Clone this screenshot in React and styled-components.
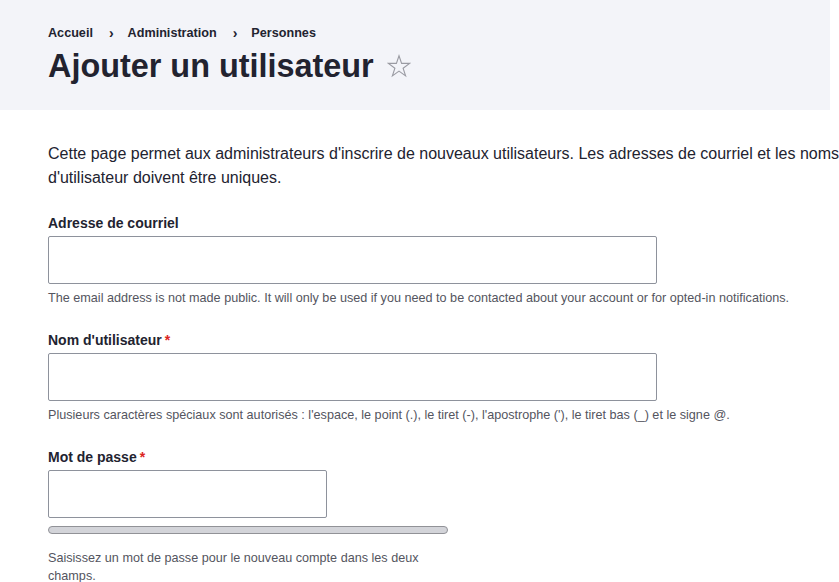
import React from "react";
import styled, { createGlobalStyle } from "styled-components";

const Global = createGlobalStyle`
  html, body { margin: 0; padding: 0; background: #fff; overflow: hidden; }
  body { font-family: "Liberation Sans", Arial, sans-serif; color: #222330; }
`;

const Page = styled.div`
  width: 900px;
`;

const Header = styled.header`
  width: 830px;
  box-sizing: border-box;
  height: 110px;
  background: #f3f4f9;
  padding: 25px 48px 0;
`;

const Crumbs = styled.nav`
  display: flex;
  align-items: center;
  font-size: 12.64px;
  font-weight: 700;
  line-height: 16px;
  color: #222330;
`;

const Sep = styled.span`
  margin: 0 14px 0 16px;
  font-size: 14px;
  font-weight: 700;
`;

const TitleRow = styled.div`
  display: flex;
  align-items: center;
  margin-top: 5px;
`;

const Title = styled.h1`
  margin: 0;
  font-size: 32.4px;
  font-weight: 700;
  line-height: 40px;
`;

const Star = styled.svg`
  margin-left: 13px;
`;

const Main = styled.main`
  padding: 32px 48px 0;
`;

const Intro = styled.p`
  margin: 0 0 25px;
  width: 800px;
  font-size: 16px;
  line-height: 23.5px;
  color: #222330;
`;

const Field = styled.div`
  margin-bottom: 24px;
`;

const Label = styled.label`
  display: block;
  font-size: 14px;
  font-weight: 700;
  line-height: 18px;
  margin-bottom: 4px;
`;

const Req = styled.span`
  color: #dc2323;
  margin-left: 3px;
`;

const Input = styled.input`
  display: block;
  box-sizing: border-box;
  width: ${(p) => p.$w}px;
  height: 48px;
  border: 1px solid #8e929c;
  border-radius: 2px;
  background: #fff;
  margin: 0;
`;

const Desc = styled.div`
  margin-top: ${(p) => (p.$narrow ? "15px" : "5px")};
  font-size: 12.64px;
  line-height: 18px;
  color: #545560;
  max-width: ${(p) => (p.$narrow ? "400px" : "none")};
`;

const Meter = styled.div`
  box-sizing: border-box;
  width: 400px;
  height: 8px;
  margin-top: 8px;
  border: 1px solid #919297;
  border-radius: 4px;
  background: #d3d4d9;
`;

export default function App() {
  return (
    <Page>
      <Global />
      <Header>
        <Crumbs>
          <span>Accueil</span>
          <Sep>›</Sep>
          <span>Administration</span>
          <Sep>›</Sep>
          <span>Personnes</span>
        </Crumbs>
        <TitleRow>
          <Title>Ajouter un utilisateur</Title>
          <Star width="24" height="24" viewBox="0 0 24 24">
            <path
              d="M12 1.8l2.6 7.6h8l-6.5 4.8 2.5 7.7L12 17.1l-6.6 4.8 2.5-7.7L1.4 9.4h8z"
              fill="none"
              stroke="#9a9ba3"
              strokeWidth="1.1"
              strokeLinejoin="miter"
            />
          </Star>
        </TitleRow>
      </Header>
      <Main>
        <Intro>
          Cette page permet aux administrateurs d'inscrire de nouveaux utilisateurs. Les adresses de courriel et les noms d'utilisateur doivent être uniques.
        </Intro>
        <Field>
          <Label>Adresse de courriel</Label>
          <Input $w={609} type="email" />
          <Desc>
            The email address is not made public. It will only be used if you need to be contacted about your account or for opted-in notifications.
          </Desc>
        </Field>
        <Field>
          <Label>
            Nom d'utilisateur<Req>*</Req>
          </Label>
          <Input $w={609} type="text" />
          <Desc>
            Plusieurs caractères spéciaux sont autorisés : l'espace, le point (.), le tiret (-), l'apostrophe ('), le tiret bas (_) et le signe @.
          </Desc>
        </Field>
        <Field>
          <Label>
            Mot de passe<Req>*</Req>
          </Label>
          <Input $w={279} type="password" />
          <Meter />
          <Desc $narrow>
            Saisissez un mot de passe pour le nouveau compte dans les deux champs.
          </Desc>
        </Field>
      </Main>
    </Page>
  );
}
